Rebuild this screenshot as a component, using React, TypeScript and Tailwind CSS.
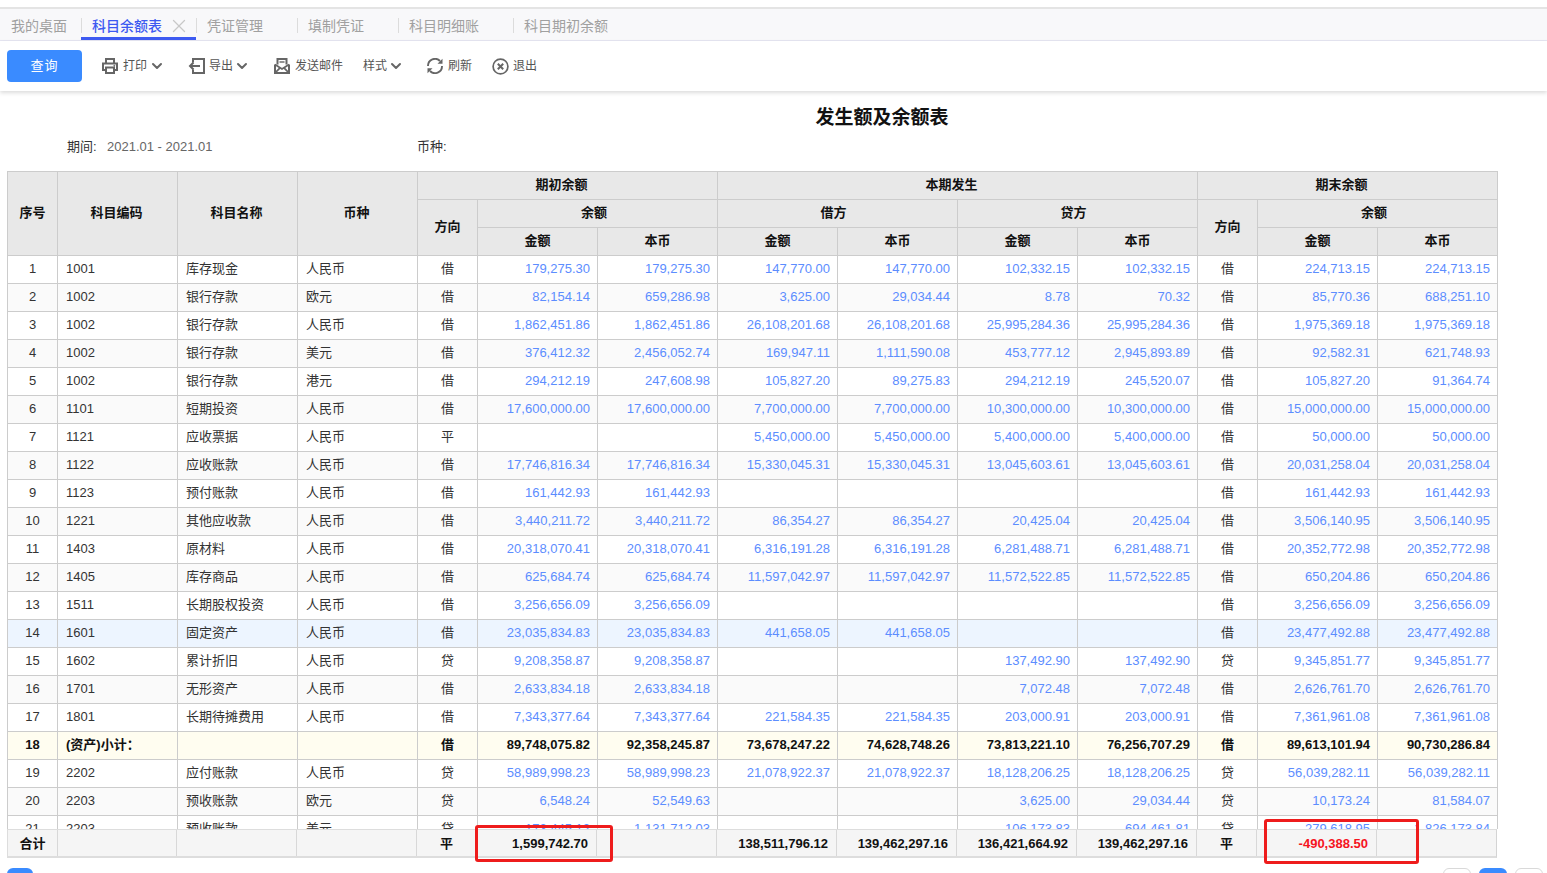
import { ChevronDown, X } from "lucide-react";

const tabs = ["凭证管理", "填制凭证", "科目明细账", "科目期初余额"];

const widths = [50, 120, 120, 120, 60, 120, 120, 120, 120, 120, 120, 60, 120, 120];

type Row = (string | number)[];

const rows: Row[] = [
  [1, "1001", "库存现金", "人民币", "借", "179,275.30", "179,275.30", "147,770.00", "147,770.00", "102,332.15", "102,332.15", "借", "224,713.15", "224,713.15"],
  [2, "1002", "银行存款", "欧元", "借", "82,154.14", "659,286.98", "3,625.00", "29,034.44", "8.78", "70.32", "借", "85,770.36", "688,251.10"],
  [3, "1002", "银行存款", "人民币", "借", "1,862,451.86", "1,862,451.86", "26,108,201.68", "26,108,201.68", "25,995,284.36", "25,995,284.36", "借", "1,975,369.18", "1,975,369.18"],
  [4, "1002", "银行存款", "美元", "借", "376,412.32", "2,456,052.74", "169,947.11", "1,111,590.08", "453,777.12", "2,945,893.89", "借", "92,582.31", "621,748.93"],
  [5, "1002", "银行存款", "港元", "借", "294,212.19", "247,608.98", "105,827.20", "89,275.83", "294,212.19", "245,520.07", "借", "105,827.20", "91,364.74"],
  [6, "1101", "短期投资", "人民币", "借", "17,600,000.00", "17,600,000.00", "7,700,000.00", "7,700,000.00", "10,300,000.00", "10,300,000.00", "借", "15,000,000.00", "15,000,000.00"],
  [7, "1121", "应收票据", "人民币", "平", "", "", "5,450,000.00", "5,450,000.00", "5,400,000.00", "5,400,000.00", "借", "50,000.00", "50,000.00"],
  [8, "1122", "应收账款", "人民币", "借", "17,746,816.34", "17,746,816.34", "15,330,045.31", "15,330,045.31", "13,045,603.61", "13,045,603.61", "借", "20,031,258.04", "20,031,258.04"],
  [9, "1123", "预付账款", "人民币", "借", "161,442.93", "161,442.93", "", "", "", "", "借", "161,442.93", "161,442.93"],
  [10, "1221", "其他应收款", "人民币", "借", "3,440,211.72", "3,440,211.72", "86,354.27", "86,354.27", "20,425.04", "20,425.04", "借", "3,506,140.95", "3,506,140.95"],
  [11, "1403", "原材料", "人民币", "借", "20,318,070.41", "20,318,070.41", "6,316,191.28", "6,316,191.28", "6,281,488.71", "6,281,488.71", "借", "20,352,772.98", "20,352,772.98"],
  [12, "1405", "库存商品", "人民币", "借", "625,684.74", "625,684.74", "11,597,042.97", "11,597,042.97", "11,572,522.85", "11,572,522.85", "借", "650,204.86", "650,204.86"],
  [13, "1511", "长期股权投资", "人民币", "借", "3,256,656.09", "3,256,656.09", "", "", "", "", "借", "3,256,656.09", "3,256,656.09"],
  [14, "1601", "固定资产", "人民币", "借", "23,035,834.83", "23,035,834.83", "441,658.05", "441,658.05", "", "", "借", "23,477,492.88", "23,477,492.88"],
  [15, "1602", "累计折旧", "人民币", "贷", "9,208,358.87", "9,208,358.87", "", "", "137,492.90", "137,492.90", "贷", "9,345,851.77", "9,345,851.77"],
  [16, "1701", "无形资产", "人民币", "借", "2,633,834.18", "2,633,834.18", "", "", "7,072.48", "7,072.48", "借", "2,626,761.70", "2,626,761.70"],
  [17, "1801", "长期待摊费用", "人民币", "借", "7,343,377.64", "7,343,377.64", "221,584.35", "221,584.35", "203,000.91", "203,000.91", "借", "7,361,961.08", "7,361,961.08"],
  [18, "(资产)小计：", "", "", "借", "89,748,075.82", "92,358,245.87", "73,678,247.22", "74,628,748.26", "73,813,221.10", "76,256,707.29", "借", "89,613,101.94", "90,730,286.84"],
  [19, "2202", "应付账款", "人民币", "贷", "58,989,998.23", "58,989,998.23", "21,078,922.37", "21,078,922.37", "18,128,206.25", "18,128,206.25", "贷", "56,039,282.11", "56,039,282.11"],
  [20, "2203", "预收账款", "欧元", "贷", "6,548.24", "52,549.63", "", "", "3,625.00", "29,034.44", "贷", "10,173.24", "81,584.07"],
  [21, "2203", "预收账款", "美元", "贷", "173,445.12", "1,131,712.03", "", "", "106,173.83", "694,461.81", "贷", "279,618.95", "1,826,173.84"],
];

const footer = [
  { w: "w-[50px]", text: "合计", cls: "justify-center" },
  { w: "w-[119px]", text: "" },
  { w: "w-[120px]", text: "" },
  { w: "w-[120px]", text: "" },
  { w: "w-[60px]", text: "平", cls: "justify-center" },
  { w: "w-[120px]", text: "1,599,742.70", cls: "justify-end" },
  { w: "w-[120px]", text: "" },
  { w: "w-[120px]", text: "138,511,796.12", cls: "justify-end" },
  { w: "w-[120px]", text: "139,462,297.16", cls: "justify-end" },
  { w: "w-[120px]", text: "136,421,664.92", cls: "justify-end" },
  { w: "w-[120px]", text: "139,462,297.16", cls: "justify-end" },
  { w: "w-[60px]", text: "平", cls: "justify-center" },
  { w: "w-[120px]", text: "-490,388.50", cls: "justify-end text-[#f5141e]" },
  { w: "w-[120px]", text: "" },
];

const th = "border border-[#cccccc] bg-[#e8e8e8] pt-0 pb-[2px] pl-0 text-center font-bold text-[#111]";

const PrinterIcon = () => (
  <svg width="16" height="16" viewBox="0 0 16 16" fill="none" stroke="#666" strokeWidth="2">
    <path d="M4 5.5V1h8v4.5" />
    <path d="M4 12H1V5.5h14V12h-3" />
    <path d="M4 9.5h8V15H4z" />
    <circle cx="12.3" cy="7.8" r="0.5" fill="#666" strokeWidth="1" />
  </svg>
);

const ExportIcon = () => (
  <svg width="17" height="16" viewBox="0 0 17 16" fill="none" stroke="#666" strokeWidth="2">
    <path d="M5 4.5V1h11v14H5v-3.5" />
    <path d="M12 8H2" />
    <path d="M5.5 4.5 2 8l3.5 3.5" />
  </svg>
);

const MailIcon = () => (
  <svg width="16" height="16" viewBox="0 0 16 16" fill="none" stroke="#666" strokeWidth="1.8">
    <path d="M3.5 6.5V1h9v5.5" strokeWidth="2" />
    <path d="M1 6.5V15h14V6.5" strokeWidth="2" />
    <path d="M1 6.5 8 11l7-4.5" />
    <path d="M1.5 14.5 6 9.8M14.5 14.5 10 9.8" />
    <path d="M5.5 4h5" strokeWidth="1.4" />
  </svg>
);

const RefreshIcon = () => (
  <svg width="18" height="16" viewBox="0 0 18 16" fill="none" stroke="#666" strokeWidth="1.9">
    <path d="M2 8a7 7 0 0 1 12-5" />
    <path d="M16 8a7 7 0 0 1-12 5" />
    <path d="M16.5 0.8v5h-5z" fill="#666" stroke="none" />
    <path d="M1.5 15.2v-5h5z" fill="#666" stroke="none" />
  </svg>
);

const ExitIcon = () => (
  <svg width="17" height="17" viewBox="0 0 17 17" fill="none" stroke="#666">
    <circle cx="8.5" cy="8.5" r="7.4" strokeWidth="1.7" />
    <path d="m5.8 5.8 5.4 5.4M11.2 5.8l-5.4 5.4" strokeWidth="2" />
  </svg>
);

const Chevron = () => <ChevronDown size={16} strokeWidth={3} className="-mx-[3px] text-[#666]" />;

export default function App() {
  return (
    <div className="h-[873px] w-full overflow-hidden bg-white font-['Liberation_Sans','Noto_Sans_CJK_SC',sans-serif] text-[13px] text-[#333]">
      {/* Tabs */}
      <div className="mt-[7px] flex h-[34px] border-t-2 border-b border-t-[#e4e4e4] border-b-[#e6e6f2] bg-[#f8f8fa] text-[14px] text-[#a0a0a0]">
        <div className="flex w-[81px] items-center pt-[3px] pl-[11px]">我的桌面</div>
        <div className="relative flex w-[115px] items-center border-b-[3px] border-[#3d5af1] pt-[6px] pl-[11px] font-medium text-[#3d5af1]">
          <span className="absolute top-[9px] left-0 h-[15px] w-px bg-[#dcdcdc]" />
          科目余额表
          <X size={22} strokeWidth={1.4} className="-my-[5px] ml-[6px] text-[#c8c8c8]" />
        </div>
        {tabs.map((t) => (
          <div key={t} className="relative flex items-center pt-[3px] pr-[34px] pl-[11px]">
            <span className="absolute top-[9px] left-0 h-[15px] w-px bg-[#dcdcdc]" />
            {t}
          </div>
        ))}
      </div>

      {/* Toolbar */}
      <div className="relative flex h-[50px] items-center pl-[7px] text-[12px] text-[#555] shadow-[0_2px_4px_rgba(0,0,0,0.14)]">
        <button className="h-[32px] w-[75px] rounded bg-[#3a8bff] text-[13px] tracking-[1px] text-white">查询</button>
        <div className="ml-[20px] flex items-center gap-[5px]">
          <PrinterIcon />
          打印
          <Chevron />
        </div>
        <div className="ml-[26px] flex items-center gap-[4px]">
          <ExportIcon />
          导出
          <Chevron />
        </div>
        <div className="ml-[27px] flex items-center gap-[5px]">
          <MailIcon />
          发送邮件
        </div>
        <div className="ml-[20px] flex items-center gap-[4px]">
          样式
          <Chevron />
        </div>
        <div className="ml-[25px] flex items-center gap-[4px]">
          <RefreshIcon />
          刷新
        </div>
        <div className="ml-[20px] flex items-center gap-[4px]">
          <ExitIcon />
          退出
        </div>
      </div>

      {/* Title */}
      <h1 className="mt-[14px] pl-[217px] text-center text-[19px] leading-[26px] font-bold text-[#111]">发生额及余额表</h1>

      {/* Period */}
      <div className="mt-[3px] flex h-[26px] items-center pl-[67px]">
        <span className="w-[40px]">期间:</span>
        <span className="w-[310px] text-[#666]">2021.01 - 2021.01</span>
        <span>币种:</span>
      </div>

      {/* Table */}
      <div className="relative mt-[11px] h-[658px] overflow-hidden pl-[7px]">
        <table className="w-[1491px] table-fixed border-collapse">
          <colgroup>
            {widths.map((w, i) => (
              <col key={i} style={{ width: w }} />
            ))}
          </colgroup>
          <thead>
            <tr className="h-[28px]">
              <th rowSpan={3} className={`${th} pr-0`}>序号</th>
              <th rowSpan={3} className={`${th} pr-[2px]`}>科目编码</th>
              <th rowSpan={3} className={`${th} pr-[2px]`}>科目名称</th>
              <th rowSpan={3} className={`${th} pr-[2px]`}>币种</th>
              <th colSpan={3} className={`${th} pr-[12px]`}>期初余额</th>
              <th colSpan={4} className={`${th} pr-[12px]`}>本期发生</th>
              <th colSpan={3} className={`${th} pr-[12px]`}>期末余额</th>
            </tr>
            <tr className="h-[28px]">
              <th rowSpan={2} className={`${th} pr-0`}>方向</th>
              <th colSpan={2} className={`${th} pr-[7px]`}>余额</th>
              <th colSpan={2} className={`${th} pr-[8px]`}>借方</th>
              <th colSpan={2} className={`${th} pr-[8px]`}>贷方</th>
              <th rowSpan={2} className={`${th} pr-0`}>方向</th>
              <th colSpan={2} className={`${th} pr-[7px]`}>余额</th>
            </tr>
            <tr className="h-[28px]">
              {["金额", "本币", "金额", "本币", "金额", "本币"].map((t, i) => (
                <th key={i} className={`${th} pr-0`}>{t}</th>
              ))}
              {["金额", "本币"].map((t, i) => (
                <th key={i} className={`${th} pr-0`}>{t}</th>
              ))}
            </tr>
          </thead>
          <tbody>
            {rows.map((row) => {
              const n = row[0] as number;
              const sub = n === 18;
              const bg = sub ? "bg-[#fffdf0]" : n === 14 ? "bg-[#edf5ff]" : n % 2 === 0 ? "bg-[#fafafa]" : "bg-white";
              return (
                <tr key={n} className={`h-[28px] ${bg} ${sub ? "font-bold text-[#111]" : ""}`}>
                  {row.map((cell, i) => {
                    const center = i === 0 || i === 4 || i === 11;
                    const left = i >= 1 && i <= 3;
                    return (
                      <td
                        key={i}
                        className={
                          "border border-[#cccccc] pb-px whitespace-nowrap " +
                          (center
                            ? "text-center"
                            : left
                              ? "pl-[8px] text-left"
                              : `pr-[7px] text-right ${sub ? "" : "text-[#5c8dff]"}`)
                        }
                      >
                        {cell}
                      </td>
                    );
                  })}
                </tr>
              );
            })}
          </tbody>
        </table>
      </div>

      {/* Footer totals */}
      <div className="ml-[7px] flex h-[29px] w-[1490px] border-t border-r border-b-2 border-[#dddddd] border-r-[#d4d4d4] bg-[#f5f5f5] font-bold text-[#111]">
        {footer.map((c, i) => (
          <div key={i} className={`flex items-center px-[8px] pt-px ${i > 0 ? "border-l border-[#d8d8d8]" : "border-l border-[#dddddd]"} ${c.w} ${c.cls ?? ""}`}>
            {c.text}
          </div>
        ))}
      </div>

      {/* Pagination */}
      <div className="mt-[10px] flex justify-between pr-[4px] pl-[7px]">
        <div className="h-[26px] w-[26px] rounded-md bg-[#3a8bff]" />
        <div className="flex gap-[8px]">
          <div className="h-[26px] w-[28px] rounded-md border border-[#d9d9d9]" />
          <div className="h-[26px] w-[28px] rounded-md bg-[#3a8bff]" />
          <div className="h-[26px] w-[28px] rounded-md border border-[#d9d9d9]" />
        </div>
      </div>

      {/* Red annotation boxes */}
      <div className="absolute top-[825px] left-[475px] h-[37px] w-[138px] rounded-[3px] border-[3px] border-[#ee1c1c]" />
      <div className="absolute top-[819px] left-[1264px] h-[45px] w-[155px] rounded-[3px] border-[3px] border-[#ee1c1c]" />
    </div>
  );
}
